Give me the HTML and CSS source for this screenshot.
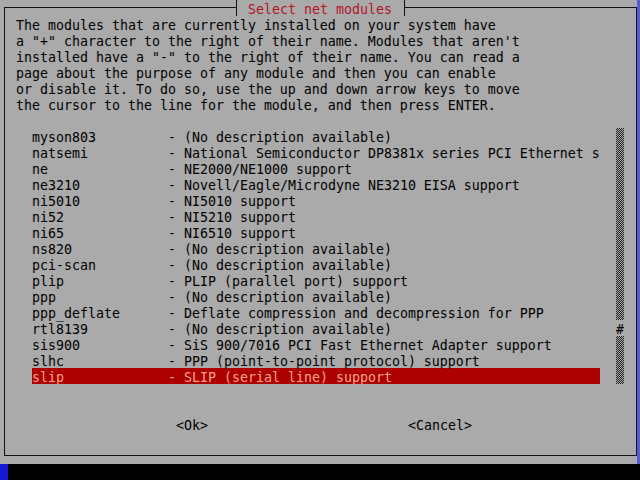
FILE: index.html
```html
<!DOCTYPE html>
<html lang="en">
<head>
<meta charset="utf-8">
<title>Select net modules</title>
<link rel="stylesheet" href="styles.css">
</head>
<body>
<div class="screen">
  <div class="gray">
    <div class="frame">
      <div class="title"><span class="tee tee-l"></span><span class="title-text">Select net modules</span><span class="tee tee-r"></span></div>
      <p class="intro">The modules that are currently installed on your system have
a "+" character to the right of their name. Modules that aren't
installed have a "-" to the right of their name. You can read a
page about the purpose of any module and then you can enable
or disable it. To do so, use the up and down arrow keys to move
the cursor to the line for the module, and then press ENTER.</p>
      <div class="listarea">
        <ul class="list">
          <li><span class="name">myson803</span><span class="desc">- (No description available)</span></li>
          <li><span class="name">natsemi</span><span class="desc">- National Semiconductor DP8381x series PCI Ethernet s</span></li>
          <li><span class="name">ne</span><span class="desc">- NE2000/NE1000 support</span></li>
          <li><span class="name">ne3210</span><span class="desc">- Novell/Eagle/Microdyne NE3210 EISA support</span></li>
          <li><span class="name">ni5010</span><span class="desc">- NI5010 support</span></li>
          <li><span class="name">ni52</span><span class="desc">- NI5210 support</span></li>
          <li><span class="name">ni65</span><span class="desc">- NI6510 support</span></li>
          <li><span class="name">ns820</span><span class="desc">- (No description available)</span></li>
          <li><span class="name">pci-scan</span><span class="desc">- (No description available)</span></li>
          <li><span class="name">plip</span><span class="desc">- PLIP (parallel port) support</span></li>
          <li><span class="name">ppp</span><span class="desc">- (No description available)</span></li>
          <li><span class="name">ppp_deflate</span><span class="desc">- Deflate compression and decompression for PPP</span></li>
          <li><span class="name">rtl8139</span><span class="desc">- (No description available)</span></li>
          <li><span class="name">sis900</span><span class="desc">- SiS 900/7016 PCI Fast Ethernet Adapter support</span></li>
          <li><span class="name">slhc</span><span class="desc">- PPP (point-to-point protocol) support</span></li>
          <li class="active"><span class="name">slip</span><span class="desc">- SLIP (serial line) support</span></li>
        </ul>
        <div class="scroll">
          <div class="hatch hatch-top"></div>
          <div class="thumb">#</div>
          <div class="hatch hatch-bottom"></div>
        </div>
      </div>
      <div class="buttons"><span class="btn">&lt;Ok&gt;</span><span class="btn">&lt;Cancel&gt;</span></div>
    </div>
  </div>
  <div class="console"><span class="cursor"></span></div>
</div>
</body>
</html>
```

FILE: styles.css
```css
html, body {
  margin: 0;
  padding: 0;
  background: #000;
  overflow: hidden;
}

.screen {
  width: 640px;
  height: 480px;
  display: flex;
  flex-direction: column;
  font-family: "DejaVu Sans Mono", "Liberation Mono", monospace;
  font-size: 13.29px;
  line-height: 16px;
  color: #000;
}

.gray {
  width: 640px;
  height: 464px;
  box-sizing: border-box;
  background: #aaaaaa;
  border-right: 3px solid #5c5cc8;
  overflow: hidden;
}

.frame {
  position: relative;
  box-sizing: border-box;
  width: 633px;
  height: 449px;
  margin: 7px 0 0 4px;
  border: 1px solid #111;
  padding: 10px 0 0 11px;
}

.title {
  position: absolute;
  left: 227px;
  top: -8px;
  height: 16px;
  display: flex;
  background: #aaaaaa;
}

.tee {
  width: 8px;
  height: 16px;
}

.tee-l {
  background:
    linear-gradient(#111, #111) 4px 0 / 1px 16px no-repeat,
    linear-gradient(#111, #111) 0 7px / 4px 1px no-repeat;
}

.tee-r {
  background:
    linear-gradient(#111, #111) 4px 0 / 1px 16px no-repeat,
    linear-gradient(#111, #111) 4px 7px / 4px 1px no-repeat;
}

.title-text {
  box-sizing: border-box;
  height: 16px;
  padding: 4px 8px 0;
  line-height: 12px;
  color: #b3142c;
  white-space: pre;
}

.intro {
  margin: 0;
  height: 96px;
  white-space: pre;
}

.listarea {
  margin-top: 14px;
  padding-left: 16px;
  display: flex;
  gap: 16px;
  height: 256px;
}

.list {
  list-style: none;
  margin: 0;
  padding: 0;
  width: 568px;
  height: 256px;
}

.list li {
  display: flex;
  box-sizing: border-box;
  height: 16px;
  padding-top: 4px;
  line-height: 12px;
  white-space: pre;
}

.list .name {
  flex: 0 0 auto;
  width: 136px;
}

.list .desc {
  flex: 1 1 auto;
}

.list li.active {
  background: #ad0000;
  color: #f2a68a;
}

.scroll {
  width: 8px;
  height: 256px;
  display: flex;
  flex-direction: column;
}

.hatch {
  width: 8px;
  background: repeating-conic-gradient(#222 0 25%, transparent 0 50%) 0 0 / 2px 2px;
}

.hatch-top {
  height: 192px;
}

.hatch-bottom {
  height: 48px;
}

.thumb {
  box-sizing: border-box;
  height: 16px;
  width: 8px;
  padding-top: 4px;
  line-height: 12px;
  text-align: center;
}

.buttons {
  box-sizing: border-box;
  margin-top: 32px;
  padding: 4px 0 0 160px;
  display: flex;
  gap: 200px;
  height: 16px;
  line-height: 12px;
  white-space: pre;
}

.console {
  height: 16px;
  background: #000;
  display: flex;
}

.cursor {
  width: 8px;
  height: 16px;
  background: #1818d8;
}
```
